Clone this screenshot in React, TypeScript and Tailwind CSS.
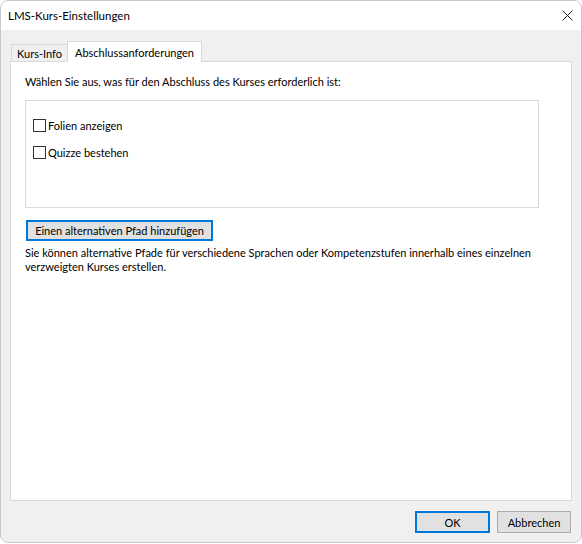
import React, { useState } from 'react';

const font = { fontFamily: 'Lato, "Noto Sans", sans-serif' };

const Check: React.FC<{ label: string }> = ({ label }) => {
  const [on, setOn] = useState(false);
  return (
    <label className="flex items-center h-[13px] cursor-default" onClick={() => setOn(!on)}>
      <span className="w-[13px] h-[13px] border border-[#333333] bg-white flex items-center justify-center">
        {on && (
          <svg width="9" height="9" viewBox="0 0 9 9">
            <path d="M1 4.5 L3.5 7 L8 1.5" stroke="#333" strokeWidth="1.3" fill="none" />
          </svg>
        )}
      </span>
      <span className="ml-[2px] leading-none">{label}</span>
    </label>
  );
};

const App: React.FC = () => {
  const [tab, setTab] = useState<'info' | 'done'>('done');

  return (
    <div
      className="w-[582px] h-[544px] bg-white text-[11px] text-black antialiased overflow-hidden"
      style={font}
    >
      <div className="w-[582px] h-[543px] border border-[#c9c9c9] rounded-[8px] bg-[#f0f0f0] flex flex-col overflow-hidden">
        {/* title bar */}
        <div className="h-[29px] bg-white flex items-center justify-between pl-[7px] pr-[8px] shrink-0">
          <span className="text-[11.5px] leading-none">LMS-Kurs-Einstellungen</span>
          <svg width="11" height="11" viewBox="0 0 11 11">
            <path d="M0.5 0.5 L10.5 10.5 M10.5 0.5 L0.5 10.5" stroke="#222" strokeWidth="1" />
          </svg>
        </div>

        {/* tabs */}
        <div className="flex items-end pl-[10px] pt-[11px] h-[32px] shrink-0 whitespace-nowrap">
          <button
            onClick={() => setTab('info')}
            className={`w-[57px] h-[18px] border border-b-0 border-[#d9d9d9] leading-none ${tab === 'info' ? 'bg-white' : 'bg-[#f0f0f0]'}`}
          >
            Kurs-Info
          </button>
          <button
            onClick={() => setTab('done')}
            className={`relative -ml-px w-[135px] h-[21px] border border-b-0 border-[#d9d9d9] leading-none z-10 ${tab === 'done' ? 'bg-white' : 'bg-[#f0f0f0]'}`}
          >
            Abschlussanforderungen
          </button>
        </div>

        {/* tab panel */}
        <div className="mx-[9px] -mt-px h-[440px] bg-white border border-[#d9d9d9] shrink-0 px-[14px] pt-[12px]">
          <p className="leading-[16px]">Wählen Sie aus, was für den Abschluss des Kurses erforderlich ist:</p>
          <div className="mt-[10px] w-[514px] h-[108px] border border-[#d9d9d9] pl-[7px] pt-[18px] flex flex-col gap-[14px]">
            <Check label="Folien anzeigen" />
            <Check label="Quizze bestehen" />
          </div>
          <button className="mt-[12px] ml-px w-[187px] h-[21px] bg-[#e1e1e1] border-2 border-[#0078d7] leading-none whitespace-nowrap">
            Einen alternativen Pfad hinzufügen
          </button>
          <p className="mt-[5px] leading-[14px] w-[520px]">
            Sie können alternative Pfade für verschiedene Sprachen oder Kompetenzstufen innerhalb eines einzelnen verzweigten Kurses erstellen.
          </p>
        </div>

        {/* footer buttons */}
        <div className="flex justify-end gap-[7px] pr-[10px] pt-[10px]">
          <button className="w-[75px] h-[22px] bg-[#e1e1e1] border-2 border-[#0078d7] leading-none">OK</button>
          <button className="w-[74px] h-[22px] bg-[#e1e1e1] border border-[#adadad] leading-none">Abbrechen</button>
        </div>
      </div>
    </div>
  );
};

export default App;
